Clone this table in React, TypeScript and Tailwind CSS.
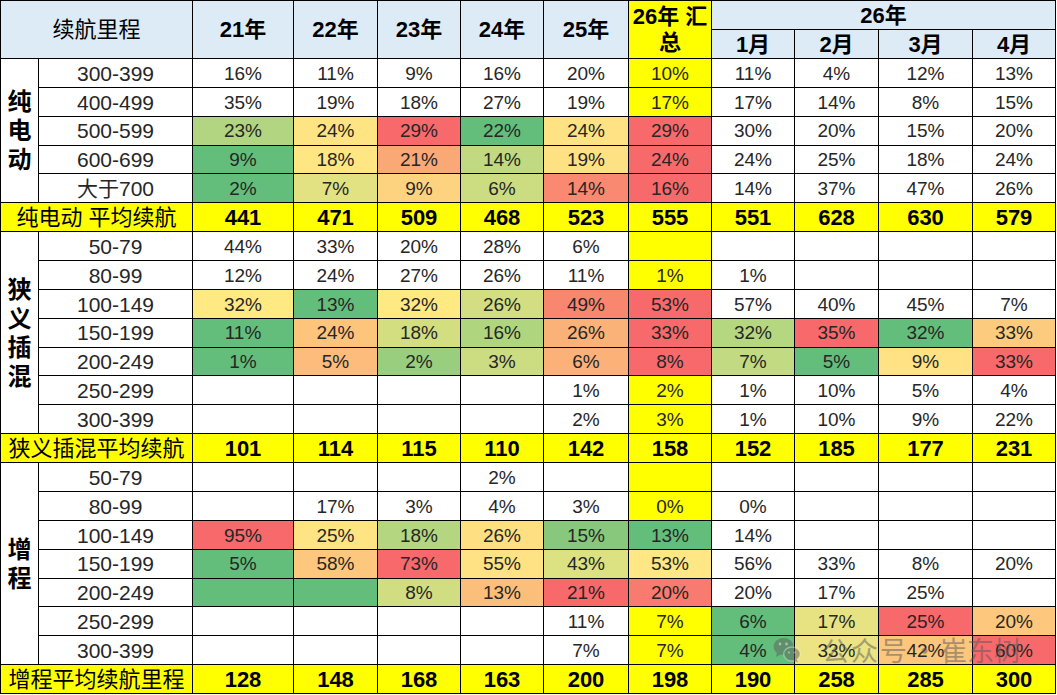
import React from "react";

type C = [string, string?];

const YEAR_HEADERS = ["21年", "22年", "23年", "24年", "25年"];
const MONTHS = ["1月", "2月", "3月", "4月"];

type Section = {
  name: string[];
  avgLabel: string;
  rows: { label: string; cells: C[] }[];
  avg: string[];
};

const sections: Section[] = [
  {
    name: ["纯", "电", "动"],
    avgLabel: "纯电动 平均续航",
    rows: [
      { label: "300-399", cells: [["16%"], ["11%"], ["9%"], ["16%"], ["20%"], ["10%"], ["11%"], ["4%"], ["12%"], ["13%"]] },
      { label: "400-499", cells: [["35%"], ["19%"], ["18%"], ["27%"], ["19%"], ["17%"], ["17%"], ["14%"], ["8%"], ["15%"]] },
      {
        label: "500-599",
        cells: [
          ["23%", "bg-[#b1d580]"], ["24%", "bg-[#fee482]"], ["29%", "bg-[#f8696b]"], ["22%", "bg-[#63be7b]"], ["24%", "bg-[#fee283]"], ["29%", "bg-[#f8696b]"],
          ["30%"], ["20%"], ["15%"], ["20%"],
        ],
      },
      {
        label: "600-699",
        cells: [
          ["9%", "bg-[#63be7b]"], ["18%", "bg-[#fee683]"], ["21%", "bg-[#fba877]"], ["14%", "bg-[#c1da81]"], ["19%", "bg-[#fee182]"], ["24%", "bg-[#f8696b]"],
          ["24%"], ["25%"], ["18%"], ["24%"],
        ],
      },
      {
        label: "大于700",
        cells: [
          ["2%", "bg-[#63be7b]"], ["7%", "bg-[#e3e283]"], ["9%", "bg-[#fed380]"], ["6%", "bg-[#cbdc81]"], ["14%", "bg-[#f98a71]"], ["16%", "bg-[#f8696b]"],
          ["14%"], ["37%"], ["47%"], ["26%"],
        ],
      },
    ],
    avg: ["441", "471", "509", "468", "523", "555", "551", "628", "630", "579"],
  },
  {
    name: ["狭", "义", "插", "混"],
    avgLabel: "狭义插混平均续航",
    rows: [
      { label: "50-79", cells: [["44%"], ["33%"], ["20%"], ["28%"], ["6%"], [""], [""], [""], [""], [""]] },
      { label: "80-99", cells: [["12%"], ["24%"], ["27%"], ["26%"], ["11%"], ["1%"], ["1%"], [""], [""], [""]] },
      {
        label: "100-149",
        cells: [
          ["32%", "bg-[#fee983]"], ["13%", "bg-[#63be7b]"], ["32%", "bg-[#fee983]"], ["26%", "bg-[#d3de82]"], ["49%", "bg-[#f9866f]"], ["53%", "bg-[#f8696b]"],
          ["57%"], ["40%"], ["45%"], ["7%"],
        ],
      },
      {
        label: "150-199",
        cells: [
          ["11%", "bg-[#63be7b]"], ["24%", "bg-[#fdc47c]"], ["18%", "bg-[#d3de81]"], ["16%", "bg-[#b0d57f]"], ["26%", "bg-[#fbb279]"], ["33%", "bg-[#f8696b]"],
          ["32%", "bg-[#b5d780]"], ["35%", "bg-[#f8696b]"], ["32%", "bg-[#63be7b]"], ["33%", "bg-[#fdcb7e]"],
        ],
      },
      {
        label: "200-249",
        cells: [
          ["1%", "bg-[#63be7b]"], ["5%", "bg-[#fdbc7b]"], ["2%", "bg-[#98ce7e]"], ["3%", "bg-[#ccdc81]"], ["6%", "bg-[#fcb179]"], ["8%", "bg-[#f8696b]"],
          ["7%", "bg-[#c2da81]"], ["5%", "bg-[#63be7b]"], ["9%", "bg-[#fee283]"], ["33%", "bg-[#f8696b]"],
        ],
      },
      { label: "250-299", cells: [[""], [""], [""], [""], ["1%"], ["2%"], ["1%"], ["10%"], ["5%"], ["4%"]] },
      { label: "300-399", cells: [[""], [""], [""], [""], ["2%"], ["3%"], ["1%"], ["10%"], ["9%"], ["22%"]] },
    ],
    avg: ["101", "114", "115", "110", "142", "158", "152", "185", "177", "231"],
  },
  {
    name: ["增", "程"],
    avgLabel: "增程平均续航里程",
    rows: [
      { label: "50-79", cells: [[""], [""], [""], ["2%"], [""], [""], [""], [""], [""], [""]] },
      { label: "80-99", cells: [[""], ["17%"], ["3%"], ["4%"], ["3%"], ["0%"], ["0%"], [""], [""], [""]] },
      {
        label: "100-149",
        cells: [
          ["95%", "bg-[#f8696b]"], ["25%", "bg-[#fee483]"], ["18%", "bg-[#b4d680]"], ["26%", "bg-[#fedf82]"], ["15%", "bg-[#88c87d]"], ["13%", "bg-[#63be7b]"],
          ["14%"], [""], [""], [""],
        ],
      },
      {
        label: "150-199",
        cells: [
          ["5%", "bg-[#63be7b]"], ["58%", "bg-[#fdc87d]"], ["73%", "bg-[#f8696b]"], ["55%", "bg-[#fee283]"], ["43%", "bg-[#dce182]"], ["53%", "bg-[#fee784]"],
          ["56%"], ["33%"], ["8%"], ["20%"],
        ],
      },
      {
        label: "200-249",
        cells: [
          ["", "bg-[#63be7b]"], ["", "bg-[#63be7b]"], ["8%", "bg-[#d1dd81]"], ["13%", "bg-[#fcbf7b]"], ["21%", "bg-[#f8696b]"], ["20%", "bg-[#f97a6e]"],
          ["20%"], ["17%"], ["25%"], [""],
        ],
      },
      {
        label: "250-299",
        cells: [
          [""], [""], [""], [""], ["11%"], ["7%"],
          ["6%", "bg-[#63be7b]"], ["17%", "bg-[#e8e382]"], ["25%", "bg-[#f8696b]"], ["20%", "bg-[#fdc77d]"],
        ],
      },
      {
        label: "300-399",
        cells: [
          [""], [""], [""], [""], ["7%"], ["7%"],
          ["4%", "bg-[#63be7b]"], ["33%", "bg-[#ece483]"], ["42%", "bg-[#fdc67d]"], ["60%", "bg-[#f8696b]"],
        ],
      },
    ],
    avg: ["128", "148", "168", "163", "200", "198", "190", "258", "285", "300"],
  },
];

function Pct({ t }: { t: string }) {
  if (!t) return null;
  if (t.endsWith("%")) {
    return (
      <span>
        {t.slice(0, -1)}
        <span className="font-['Liberation_Sans_Narrow','Liberation_Sans',sans-serif]">%</span>
      </span>
    );
  }
  return <span>{t}</span>;
}

function WeChatLogo() {
  return (
    <svg width="28" height="26" viewBox="0 0 28 26">
      <ellipse cx="10.5" cy="9.5" rx="10" ry="8.5" fill="#5f5f5f" />
      <path d="M4 15 L3 20 L8.5 17 Z" fill="#5f5f5f" />
      <circle cx="7" cy="7" r="1.4" fill="#ffffff" opacity="0.7" />
      <circle cx="13.5" cy="7" r="1.4" fill="#ffffff" opacity="0.7" />
      <ellipse cx="19" cy="17" rx="8.3" ry="7" fill="#5f5f5f" stroke="#ffffff" strokeOpacity="0.6" strokeWidth="1.4" />
      <path d="M23.5 22 L25 25.5 L20.5 23.5 Z" fill="#5f5f5f" />
      <circle cx="16" cy="15.5" r="1.1" fill="#ffffff" opacity="0.7" />
      <circle cx="21.5" cy="15.5" r="1.1" fill="#ffffff" opacity="0.7" />
    </svg>
  );
}

export default function App() {
  return (
    <div className="relative w-[1057px] h-[695px] bg-white font-['Liberation_Sans','Noto_Sans_CJK_SC',sans-serif] text-[#262626]">
      <div className="grid w-[1056px] h-[694px] bg-black p-px gap-px grid-cols-[37px_153px_100px_83px_82px_82px_84px_82px_82px_83px_93px_82px] grid-rows-[28px_28px_repeat(22,minmax(0,1fr))]">
        {/* Header row 1 */}
        <div className="col-span-2 row-span-2 flex items-center justify-center bg-[#ddebf7] text-[22px] text-black">
          续航里程
        </div>
        {YEAR_HEADERS.map((y) => (
          <div key={y} className="row-span-2 flex items-center justify-center bg-[#ddebf7] text-[22px] font-bold text-black">
            {y}
          </div>
        ))}
        <div className="row-span-2 flex items-center justify-center bg-[#ffff00] text-center text-[22px] font-bold leading-[26px] text-black">
          <span>
            26年 汇
            <br />总
          </span>
        </div>
        <div className="col-span-4 flex items-center justify-center bg-[#ddebf7] text-[22px] font-bold text-black">
          26年
        </div>
        {/* Header row 2 */}
        {MONTHS.map((m) => (
          <div key={m} className="flex items-center justify-center bg-[#ddebf7] text-[22px] font-bold text-black">
            {m}
          </div>
        ))}

        {sections.map((s) => (
          <React.Fragment key={s.avgLabel}>
            {s.rows.map((r, ri) => (
              <React.Fragment key={r.label + ri}>
                {ri === 0 && (
                  <div
                    className={`flex flex-col items-center justify-center bg-white text-[24px] font-bold leading-[29px] text-black ${
                      s.rows.length === 5 ? "row-span-5" : "row-span-7"
                    }`}
                  >
                    {s.name.map((ch) => (
                      <span key={ch}>{ch}</span>
                    ))}
                  </div>
                )}
                <div className="flex items-center justify-center bg-white pt-px text-[21px]">{r.label}</div>
                {r.cells.map((c, ci) => (
                  <div
                    key={ci}
                    className={`flex items-center justify-center pt-[2px] text-[19px] ${
                      c[1] ? c[1] : ci === 5 ? "bg-[#ffff00]" : "bg-white"
                    }`}
                  >
                    <Pct t={c[0]} />
                  </div>
                ))}
              </React.Fragment>
            ))}
            <div className="col-span-2 flex items-center justify-center bg-[#ffff00] text-[22px] text-black">
              {s.avgLabel}
            </div>
            {s.avg.map((v, i) => (
              <div key={i} className="flex items-center justify-center bg-[#ffff00] text-[22px] font-bold text-black">
                {v}
              </div>
            ))}
          </React.Fragment>
        ))}
      </div>

      {/* Watermark */}
      <div className="pointer-events-none absolute left-[773px] top-[636px] flex items-center opacity-50">
        <WeChatLogo />
        <div className="ml-[21px] flex items-center font-['Noto_Sans_CJK_SC',sans-serif] text-[27px] leading-none text-[#5a5a5a]">
          <span className="tracking-[2px]">公众号</span>
          <span className="mx-[2px]">·</span>
          <span>崔东树</span>
        </div>
      </div>
    </div>
  );
}
